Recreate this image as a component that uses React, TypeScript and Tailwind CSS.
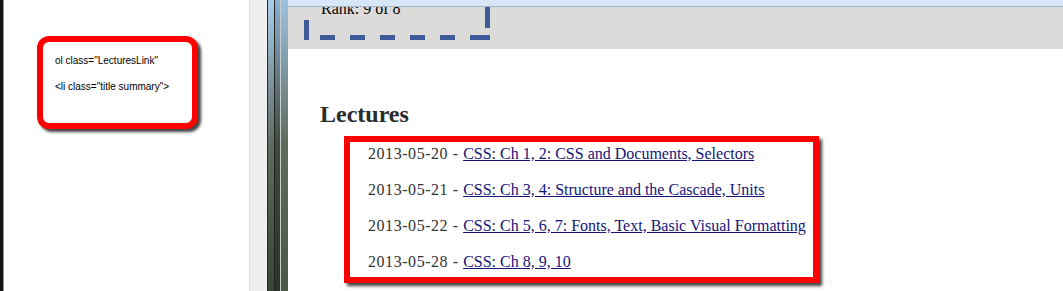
import React from "react";

const lectures = [
  { date: "2013-05-20", title: "CSS: Ch 1, 2: CSS and Documents, Selectors" },
  { date: "2013-05-21", title: "CSS: Ch 3, 4: Structure and the Cascade, Units" },
  { date: "2013-05-22", title: "CSS: Ch 5, 6, 7: Fonts, Text, Basic Visual Formatting" },
  { date: "2013-05-28", title: "CSS: Ch 8, 9, 10" },
];

function DashedBox() {
  // the blue dashed marker left over from an earlier annotation, cut off at the top
  return (
    <svg className="absolute left-[16px] top-0" width="190" height="36" viewBox="0 0 190 36">
      <g fill="#3d5a99">
        <rect x="0" y="13" width="5" height="20" />
        <rect x="16" y="28" width="15" height="5" />
        <rect x="46" y="28" width="15" height="5" />
        <rect x="76" y="28" width="15" height="5" />
        <rect x="106" y="28" width="15" height="5" />
        <rect x="136" y="28" width="15" height="5" />
        <rect x="166" y="28" width="20" height="5" />
        <rect x="181" y="0" width="5" height="21" />
      </g>
    </svg>
  );
}

export default function App() {
  return (
    <div className="flex h-[291px] w-[1063px] overflow-hidden bg-white">
      {/* left note panel */}
      <div className="w-[3px] bg-[#141618]" />
      <div className="w-[1px] bg-[#8c939b]" />
      <div className="w-[245px] bg-white pl-[33px] pt-[36px]">
        <div className="h-[93px] w-[161px] rounded-[12px] border-[6px] border-[#ff0000] bg-white pl-[12px] pt-[12px] font-['Liberation_Sans',sans-serif] text-[10px] leading-[13px] text-black shadow-[3px_3px_3px_rgba(0,0,0,0.75)]">
          <p>ol class="LecturesLink"</p>
          <p className="mt-[13px]">&lt;li class="title summary"&gt;</p>
        </div>
      </div>
      <div className="w-[18px] border-l border-[#e2e2e2] bg-[#efefef]" />
      {/* desktop peeking between windows */}
      <div className="flex w-[21px]">
        <div className="w-[1px] bg-[#2a2d30]" />
        <div className="w-[6px] bg-linear-to-b from-[#a9cdee] via-[#5f6b62] to-[#3a4436]" />
        <div className="w-[1px] bg-[#1f2320]" />
        <div className="w-[5px] bg-linear-to-b from-[#8ab0d4] via-[#43483d] to-[#2c3326]" />
        <div className="w-[1px] bg-[#c7ccd0]" />
        <div className="w-[7px] bg-linear-to-b from-[#9fc2e2] via-[#5d6b5c] to-[#4a5a45]" />
      </div>
      {/* browser page */}
      <div className="flex flex-1 flex-col">
        <div className="relative z-10 h-[7px] border-b border-[#a3b6cc] bg-[#d7e7f7]" />
        <div className="relative h-[42px] overflow-hidden bg-[#dcdbda]">
          <p className="absolute left-[33px] top-[-8px] font-['Liberation_Serif',serif] text-[16px] leading-[20px] text-black">
            Rank: 9 of 8
          </p>
          <DashedBox />
        </div>
        <div className="pl-[32px] pt-[53px]">
          <h2 className="font-['Liberation_Serif',serif] text-[24px] font-bold leading-[24px] text-[#2b2b2b]">
            Lectures
          </h2>
          <div className="ml-[24px] mt-[10px] h-[147px] w-[475px] border-[6px] border-[#ff0000] bg-white pl-[18px] shadow-[3px_3px_3px_rgba(0,0,0,0.75)]">
            <ol className="flex flex-col gap-[16px] pt-[2px] font-['Liberation_Serif',serif] text-[16px] leading-[20px] text-[#333333]">
              {lectures.map((l) => (
                <li key={l.date}>
                  <span className="tracking-[0.55px]">{l.date} - </span>
                  <a href="#" className="text-[#14147a] underline">
                    {l.title}
                  </a>
                </li>
              ))}
            </ol>
          </div>
        </div>
      </div>
    </div>
  );
}
